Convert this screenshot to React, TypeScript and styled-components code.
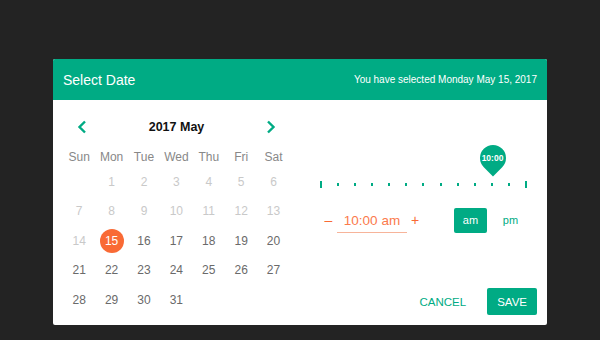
import React from "react";
import styled, { createGlobalStyle } from "styled-components";

const GREEN = "#00ab84";
const ORANGE = "#f96a35";

const Global = createGlobalStyle`
  html, body { margin: 0; padding: 0; background: #232323; }
  body { font-family: "Liberation Sans", Arial, sans-serif; }
  * { box-sizing: border-box; }
`;

const Page = styled.div`
  width: 600px;
  height: 340px;
  padding: 59px 53px 0;
  background: #232323;
`;

const Dialog = styled.div`
  width: 494px;
  height: 266px;
  background: #fff;
  border-radius: 2px;
  display: flex;
  flex-direction: column;
  overflow: hidden;
`;

const Header = styled.div`
  height: 41px;
  background: ${GREEN};
  color: #fff;
  display: flex;
  align-items: center;
  justify-content: space-between;
  padding: 0 10px;
`;

const Title = styled.div`
  font-size: 14px;
`;

const Selected = styled.div`
  font-size: 10px;
`;

const Body = styled.div`
  flex: 1;
  display: flex;
`;

const CalendarCol = styled.div`
  width: 237px;
  padding: 15px 0 0 10px;
`;

const Nav = styled.div`
  height: 24px;
  display: flex;
  align-items: center;
  justify-content: space-between;
  padding: 0 12px;
`;

const NavBtn = styled.button`
  width: 14px;
  height: 16px;
  padding: 0;
  border: none;
  background: none;
  display: flex;
  align-items: center;
  justify-content: center;
  cursor: pointer;
`;

const MonthLabel = styled.div`
  font-size: 12.5px;
  font-weight: bold;
  color: #111;
`;

const Grid = styled.div`
  display: grid;
  grid-template-columns: repeat(7, 32.4px);
  grid-template-rows: 20px;
  grid-auto-rows: 29.5px;
  margin-top: 8px;
`;

const DayName = styled.div`
  display: flex;
  align-items: center;
  justify-content: center;
  font-size: 12px;
  color: #888;
`;

const DayCell = styled.div<{ $state: "off" | "on" | "sel" | "empty" }>`
  display: flex;
  align-items: center;
  justify-content: center;
  font-size: 12px;
  color: ${(p) => (p.$state === "off" ? "#c9c9c9" : p.$state === "sel" ? "#fff" : "#6a6a6a")};
`;

const SelCircle = styled.span`
  width: 24px;
  height: 24px;
  border-radius: 50%;
  background: ${ORANGE};
  color: #fff;
  display: flex;
  align-items: center;
  justify-content: center;
  font-size: 12px;
`;

const RightCol = styled.div`
  flex: 1;
  display: flex;
  flex-direction: column;
  padding: 0 10px 10px 30px;
`;

const SliderWrap = styled.div`
  position: relative;
  margin-top: 45px;
  margin-right: 10px;
  height: 45px;
  display: flex;
  align-items: flex-end;
`;

const Ticks = styled.div`
  width: 100%;
  height: 12px;
  display: flex;
  align-items: center;
  justify-content: space-between;
`;

const Tick = styled.span<{ $end?: boolean }>`
  width: 2px;
  height: ${(p) => (p.$end ? "7px" : "3px")};
  background: ${GREEN};
`;

const Thumb = styled.div`
  position: absolute;
  top: 0;
  width: 26px;
  height: 26px;
  transform: translateX(-50%);
  display: flex;
  align-items: center;
  justify-content: center;
  color: #fff;
  font-size: 8.5px;
  font-weight: bold;
  &::before {
    content: "";
    position: absolute;
    inset: 0;
    background: ${GREEN};
    border-radius: 50% 50% 0 50%;
    transform: rotate(45deg);
  }
`;

const ThumbLabel = styled.span`
  position: relative;
`;

const TimeRow = styled.div`
  margin-top: 17px;
  height: 26px;
  display: flex;
  align-items: center;
`;

const StepBtn = styled.button<{ $w: number }>`
  width: ${(p) => p.$w}px;
  height: 26px;
  padding: 0;
  border: none;
  background: none;
  color: ${ORANGE};
  font-family: "Liberation Sans", Arial, sans-serif;
  font-size: 14px;
  display: flex;
  align-items: center;
  justify-content: center;
`;

const TimeField = styled.div`
  width: 70px;
  height: 26px;
  display: flex;
  align-items: center;
  justify-content: center;
  color: #fb7a4c;
  font-size: 13.5px;
  border-bottom: 1px solid #f7b49a;
  padding-top: 2px;
`;

const PeriodBtn = styled.button<{ $active?: boolean }>`
  width: 33px;
  height: 25px;
  padding: 0;
  border: none;
  border-radius: 2px;
  margin-left: ${(p) => (p.$active ? "31px" : "7px")};
  background: ${(p) => (p.$active ? GREEN : "transparent")};
  color: ${(p) => (p.$active ? "#fff" : GREEN)};
  font-family: "Liberation Sans", Arial, sans-serif;
  font-size: 11px;
`;

const Footer = styled.div`
  margin-top: auto;
  display: flex;
  justify-content: flex-end;
  gap: 11px;
`;

const ActionBtn = styled.button<{ $primary?: boolean }>`
  height: 27px;
  padding: 0 10px;
  border: none;
  border-radius: 2px;
  background: ${(p) => (p.$primary ? GREEN : "transparent")};
  color: ${(p) => (p.$primary ? "#fff" : GREEN)};
  font-family: "Liberation Sans", Arial, sans-serif;
  font-size: 11.5px;
  min-width: ${(p) => (p.$primary ? "49px" : "auto")};
`;

const Chevron = ({ dir }: { dir: "left" | "right" }) => (
  <svg width="10" height="14" viewBox="0 0 10 14">
    <polyline
      points={dir === "left" ? "8,1.5 2.5,7 8,12.5" : "2,1.5 7.5,7 2,12.5"}
      fill="none"
      stroke={GREEN}
      strokeWidth="2.4"
    />
  </svg>
);

const dayNames = ["Sun", "Mon", "Tue", "Wed", "Thu", "Fri", "Sat"];

export default function App() {
  const cells: (number | null)[] = [null];
  for (let d = 1; d <= 31; d++) cells.push(d);
  const ticks = Array.from({ length: 13 }, (_, i) => i);
  const thumbPos = (10 / 12) * 100;

  return (
    <>
      <Global />
      <Page>
        <Dialog>
          <Header>
            <Title>Select Date</Title>
            <Selected>You have selected Monday May 15, 2017</Selected>
          </Header>
          <Body>
            <CalendarCol>
              <Nav>
                <NavBtn>
                  <Chevron dir="left" />
                </NavBtn>
                <MonthLabel>2017 May</MonthLabel>
                <NavBtn>
                  <Chevron dir="right" />
                </NavBtn>
              </Nav>
              <Grid>
                {dayNames.map((n) => (
                  <DayName key={n}>{n}</DayName>
                ))}
                {cells.map((d, i) => {
                  if (d === null) return <DayCell key={i} $state="empty" />;
                  const state = d < 15 ? "off" : d === 15 ? "sel" : "on";
                  return (
                    <DayCell key={i} $state={state}>
                      {state === "sel" ? <SelCircle>{d}</SelCircle> : d}
                    </DayCell>
                  );
                })}
              </Grid>
            </CalendarCol>
            <RightCol>
              <SliderWrap>
                <Ticks>
                  {ticks.map((t) => (
                    <Tick key={t} $end={t === 0 || t === 12} />
                  ))}
                </Ticks>
                <Thumb style={{ left: `${thumbPos}%` }}>
                  <ThumbLabel>10:00</ThumbLabel>
                </Thumb>
              </SliderWrap>
              <TimeRow>
                <StepBtn $w={17}>–</StepBtn>
                <TimeField>10:00 am</TimeField>
                <StepBtn $w={16}>+</StepBtn>
                <PeriodBtn $active>am</PeriodBtn>
                <PeriodBtn>pm</PeriodBtn>
              </TimeRow>
              <Footer>
                <ActionBtn>CANCEL</ActionBtn>
                <ActionBtn $primary>SAVE</ActionBtn>
              </Footer>
            </RightCol>
          </Body>
        </Dialog>
      </Page>
    </>
  );
}
